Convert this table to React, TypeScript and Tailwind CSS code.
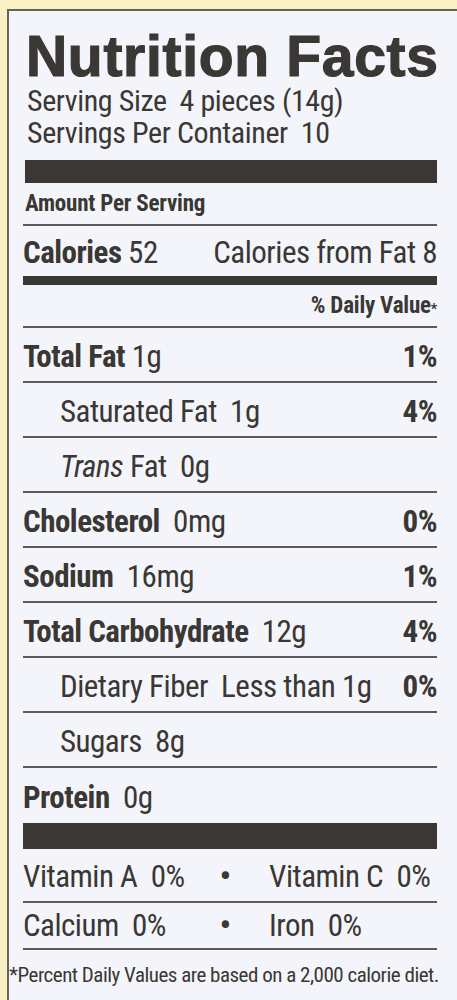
import React from "react";

const N = "font-['Roboto_Condensed','Roboto',sans-serif] [font-stretch:75%]";

function Row({ children, right, indent = false }: { children: React.ReactNode; right?: React.ReactNode; indent?: boolean }) {
  return (
    <div className={`h-[55px] flex items-center justify-between border-b-[2px] border-[#5f5b56] text-[31px] tracking-[-0.5px] leading-none pt-[3px] ${indent ? "pl-[37px]" : "pl-0"}`}>
      <div className="whitespace-pre">{children}</div>
      {right !== undefined && <div className="font-bold">{right}</div>}
    </div>
  );
}

export default function App() {
  return (
    <div className="w-[457px] h-[1000px] bg-[#f8f1c4] pt-[9px] pl-[7px] overflow-hidden">
      <div className={`h-[991px] bg-[#f3f5fa] border-t-2 border-l-2 border-[#67635a] text-[#3a3734] ${N}`}>
        <div className="pl-[14px] pr-[20px]">
          <div className="pt-[19px] h-[74px] whitespace-nowrap font-['Liberation_Sans',sans-serif] [font-stretch:normal] font-bold text-[57px] leading-[52px] tracking-[0.7px] [-webkit-text-stroke:1.2px_#3a3734] pl-[3px]">
            Nutrition Facts
          </div>
          <div className="text-[30px] tracking-[-0.4px] leading-[32px] pl-[4px] whitespace-pre">Serving Size  4 pieces (14g)</div>
          <div className="text-[30px] tracking-[-0.4px] leading-[32px] pl-[4px] whitespace-pre">Servings Per Container  10</div>
          <div className="mt-[11px] h-[23px] bg-[#3a3734] ml-[2px]" />
          <div className="h-[43px] border-b-2 border-[#5f5b56] flex items-center font-bold text-[23px] tracking-[-0.2px] pl-[2px] pt-[2px] whitespace-pre">Amount Per Serving</div>
          <div className="h-[50px] flex items-center justify-between text-[31px] tracking-[-0.5px] leading-none pt-[3px]">
            <div className="whitespace-pre"><span className="font-bold">Calories</span> 52</div>
            <div className="whitespace-pre">Calories from Fat 8</div>
          </div>
          <div className="h-[9px] bg-[#3a3734]" />
          <div className="h-[43px] border-b-2 border-[#5f5b56] flex items-center justify-end font-bold text-[23px] tracking-[-0.2px] pt-[2px] whitespace-pre">% Daily Value<span className="text-[14px] self-start mt-[12px]">*</span></div>
          <Row right="1%"><span className="font-bold">Total Fat</span> 1g</Row>
          <Row indent right="4%">Saturated Fat  1g</Row>
          <Row indent><span className="italic">Trans</span> Fat  0g</Row>
          <Row right="0%"><span className="font-bold">Cholesterol</span>  0mg</Row>
          <Row right="1%"><span className="font-bold">Sodium</span>  16mg</Row>
          <Row right="4%"><span className="font-bold">Total Carbohydrate</span>  12g</Row>
          <Row indent right="0%">Dietary Fiber  Less than 1g</Row>
          <Row indent>Sugars  8g</Row>
          <div className="h-[55px] flex items-center text-[31px] tracking-[-0.5px] leading-none whitespace-pre pt-[3px]">
            <span className="font-bold">Protein</span>  0g
          </div>
          <div className="h-[26px] bg-[#3a3734]" />
          <div className="h-[54px] flex items-center border-b-2 border-[#5f5b56] text-[31px] tracking-[-0.5px] leading-none pt-[2px]">
            <div className="w-[158px] whitespace-pre">Vitamin A  0%</div>
            <div className="w-[88px] text-center font-bold">•</div>
            <div className="flex-1 whitespace-pre">Vitamin C  0%</div>
          </div>
          <div className="h-[47px] flex items-center border-b-2 border-[#5f5b56] text-[31px] tracking-[-0.5px] leading-none">
            <div className="w-[158px] whitespace-pre">Calcium  0%</div>
            <div className="w-[88px] text-center font-bold">•</div>
            <div className="flex-1 whitespace-pre">Iron  0%</div>
          </div>
        </div>
        <div className="text-[21px] tracking-[-0.5px] leading-none pt-[15px] whitespace-pre">*Percent Daily Values are based on a 2,000 calorie diet.</div>
      </div>
    </div>
  );
}
